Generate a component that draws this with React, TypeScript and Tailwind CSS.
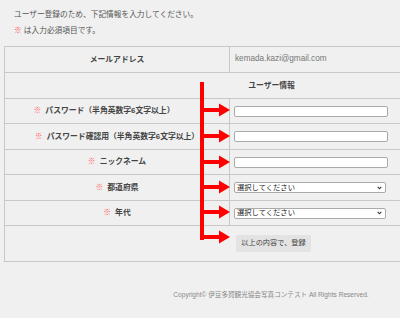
const font = { fontFamily: '"Liberation Sans", "Noto Sans CJK JP", sans-serif' };

const rows = [
  { label: "パスワード（半角英数字6文字以上）", kind: "input", h: "h-[25px]", shift: "pr-[26px]" },
  { label: "パスワード確認用（半角英数字6文字以上）", kind: "input", h: "h-[26px]", shift: "" },
  { label: "ニックネーム", kind: "input", h: "h-[25px]", shift: "" },
  { label: "都道府県", kind: "select", h: "h-[26px]", shift: "" },
  { label: "年代", kind: "select", h: "h-[25px]", shift: "" },
];

function Arrows() {
  const ys = [110, 136, 162, 187, 212, 237];
  return (
    <svg className="pointer-events-none absolute left-0 top-0" width="400" height="318">
      <rect x="200" y="82" width="4" height="158" fill="#ff0000" />
      {ys.map((y) => (
        <g key={y} fill="#ff0000">
          <rect x="203" y={y - 2} width="17" height="4" />
          <polygon points={`219,${y - 6.5} 230,${y} 219,${y + 6.5}`} />
        </g>
      ))}
    </svg>
  );
}

export default function App() {
  return (
    <div className="relative h-[318px] w-[400px] overflow-hidden bg-[#f0f0f0]" style={font}>
      <div className="w-[542px]">
        <div className="px-[14px] pt-[7px] text-[7.7px] leading-[16px] text-[#555]">
          <p>ユーザー登録のため、下記情報を入力してください。</p>
          <p>
            <span className="text-[#f55]">※</span> は入力必須項目です。
          </p>
        </div>

        <div className="mx-[4px] mt-[7px] border-l border-t border-[#c8c8c8] text-[7.8px]">
          <div className="flex h-[26px] border-b border-[#c8c8c8]">
            <div className="flex w-[225px] items-center justify-center border-r border-[#c8c8c8] font-bold text-[#444]">
              メールアドレス
            </div>
            <div className="flex flex-1 items-center pl-[5px] text-[8.2px] text-[#777]">kemada.kazi@gmail.com</div>
          </div>
          <div className="flex h-[26px] items-center justify-center border-b border-[#c8c8c8] font-bold text-[#444]">
            ユーザー情報
          </div>

          {rows.map((r) => (
            <div key={r.label} className={`flex ${r.h} border-b border-[#c8c8c8]`}>
              <div
                className={`flex w-[225px] items-center justify-center border-r border-[#c8c8c8] font-bold text-[#444] ${r.shift}`}
              >
                <span className="mr-[4px] text-[#f66]">※</span>
                {r.label}
              </div>
              <div className="flex flex-1 items-center pl-[4px]">
                {r.kind === "input" ? (
                  <div className="h-[11px] w-[154px] rounded-[2px] border border-[#aaa] bg-white" />
                ) : (
                  <div className="flex h-[11px] w-[152px] items-center justify-between rounded-[2px] border border-[#aaa] bg-white pl-[2px] pr-[3px] text-[7.3px] text-[#222]">
                    <span className="leading-none">選択してください</span>
                    <svg width="5" height="4" viewBox="0 0 5 4">
                      <path d="M0.7 0.8 L2.5 2.8 L4.3 0.8" fill="none" stroke="#333" strokeWidth="1.1" />
                    </svg>
                  </div>
                )}
              </div>
            </div>
          ))}

          <div className="flex h-[36px] items-center border-b border-[#c8c8c8] pl-[231px]">
            <div className="flex h-[17px] w-[75px] items-center justify-center rounded-[2px] bg-[#e3e3e3] text-[7.2px] text-[#444]">
              以上の内容で、登録
            </div>
          </div>
        </div>

        <div className="pt-[28px] text-center text-[6.6px] text-[#888]">
          Copyright© 伊豆多賀観光協会写真コンテスト All Rights Reserved.
        </div>
      </div>
      <Arrows />
    </div>
  );
}
